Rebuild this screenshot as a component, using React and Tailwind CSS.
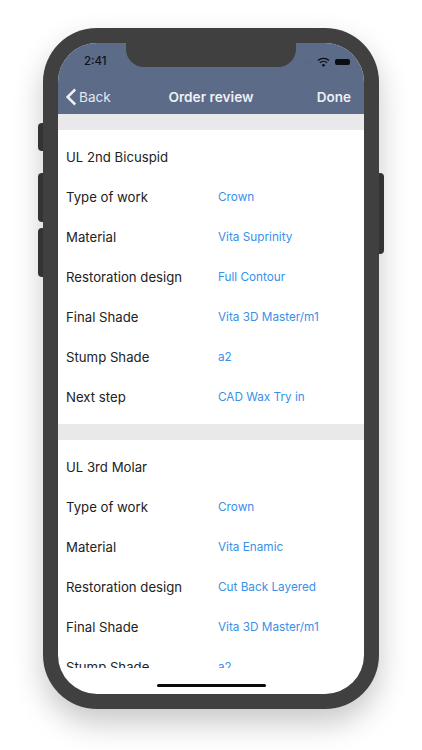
const sections = [
  {
    title: 'UL 2nd Bicuspid',
    rows: [
      ['Type of work', 'Crown'],
      ['Material', 'Vita Suprinity'],
      ['Restoration design', 'Full Contour'],
      ['Final Shade', 'Vita 3D Master/m1'],
      ['Stump Shade', 'a2'],
      ['Next step', 'CAD Wax Try in'],
    ],
  },
  {
    title: 'UL 3rd Molar',
    rows: [
      ['Type of work', 'Crown'],
      ['Material', 'Vita Enamic'],
      ['Restoration design', 'Cut Back Layered'],
      ['Final Shade', 'Vita 3D Master/m1'],
      ['Stump Shade', 'a2'],
      ['Next step', 'CAD Wax Try in'],
    ],
  },
]

const Row = ({ label, value }) => (
  <div className="flex h-10 shrink-0 items-center pl-2 pt-[2px]">
    <div className="w-[152px] shrink-0 text-[13.2px] text-[#222]">{label}</div>
    {value && <div className="text-[11.75px] text-[#3a8fe8]">{value}</div>}
  </div>
)

export default function App() {
  return (
    <div className="h-[750px] w-[422px] overflow-hidden bg-white pl-[43px] pt-[28px] font-['Inter',sans-serif]">
      <div className="relative h-[681px] w-[336px] rounded-[54px] bg-[#404040] p-[15px] shadow-[0_14px_30px_rgba(0,0,0,0.22)]">
        <div className="absolute left-[-5px] top-[95px] h-[28px] w-[5px] rounded-l-sm bg-[#333]" />
        <div className="absolute left-[-5px] top-[145px] h-[49px] w-[5px] rounded-l-sm bg-[#333]" />
        <div className="absolute left-[-5px] top-[200px] h-[49px] w-[5px] rounded-l-sm bg-[#333]" />
        <div className="absolute right-[-5px] top-[145px] h-[81px] w-[5px] rounded-r-sm bg-[#333]" />

        <div className="relative flex h-[651px] w-[306px] flex-col overflow-hidden rounded-[39px] bg-white">
          <div className="absolute left-[68px] top-0 h-[24px] w-[170px] rounded-b-[18px] bg-[#404040]" />

          <div className="flex h-[71px] shrink-0 flex-col bg-[#5b6b88]">
            <div className="flex h-[37px] items-center justify-between pl-[26px] pr-[14px]">
              <span className="text-[11.5px] font-medium text-[#10131c]">2:41</span>
              <div className="flex items-center gap-[5px]">
                <span className="mb-[2px] text-[6px] tracking-[1px] text-[#47536a]">....</span>
                <svg width="13" height="10" viewBox="0 0 13 10" fill="none">
                  <path d="M1 3.6a8 8 0 0 1 11 0M3 5.8a5 5 0 0 1 7 0" stroke="#0b0d14" strokeWidth="1.4" />
                  <circle cx="6.5" cy="8.2" r="1.3" fill="#0b0d14" />
                </svg>
                <div className="h-[6px] w-[15px] rounded-[2px] bg-[#0b0d14]" />
              </div>
            </div>
            <div className="flex flex-1 items-center justify-between pl-[7px] pr-[13px]">
              <div className="flex w-[86px] items-center gap-[2px] text-[13.6px] text-[#e4e7ee]">
                <svg width="12" height="18" viewBox="0 0 12 18" fill="none">
                  <path d="M10.2 1.5 2.6 9l7.6 7.5" stroke="#eef0f4" strokeWidth="2.5" />
                </svg>
                Back
              </div>
              <div className="text-[13.7px] font-semibold text-[#eef0f4]">Order review</div>
              <div className="flex w-[80px] justify-end text-[13.5px] font-semibold text-[#eef0f4]">Done</div>
            </div>
          </div>

          <div className="h-[554px] shrink-0 overflow-hidden">
            {sections.map((s) => (
              <div key={s.title}>
                <div className="h-4 bg-[#e9e9ec]" />
                <div className="py-[7px]">
                  <Row label={s.title} />
                  {s.rows.map(([label, value]) => (
                    <Row key={label} label={label} value={value} />
                  ))}
                </div>
              </div>
            ))}
          </div>

          <div className="absolute bottom-[7px] left-[99px] h-[3px] w-[109px] rounded-full bg-[#0a0a0a]" />
        </div>
      </div>
    </div>
  )
}
